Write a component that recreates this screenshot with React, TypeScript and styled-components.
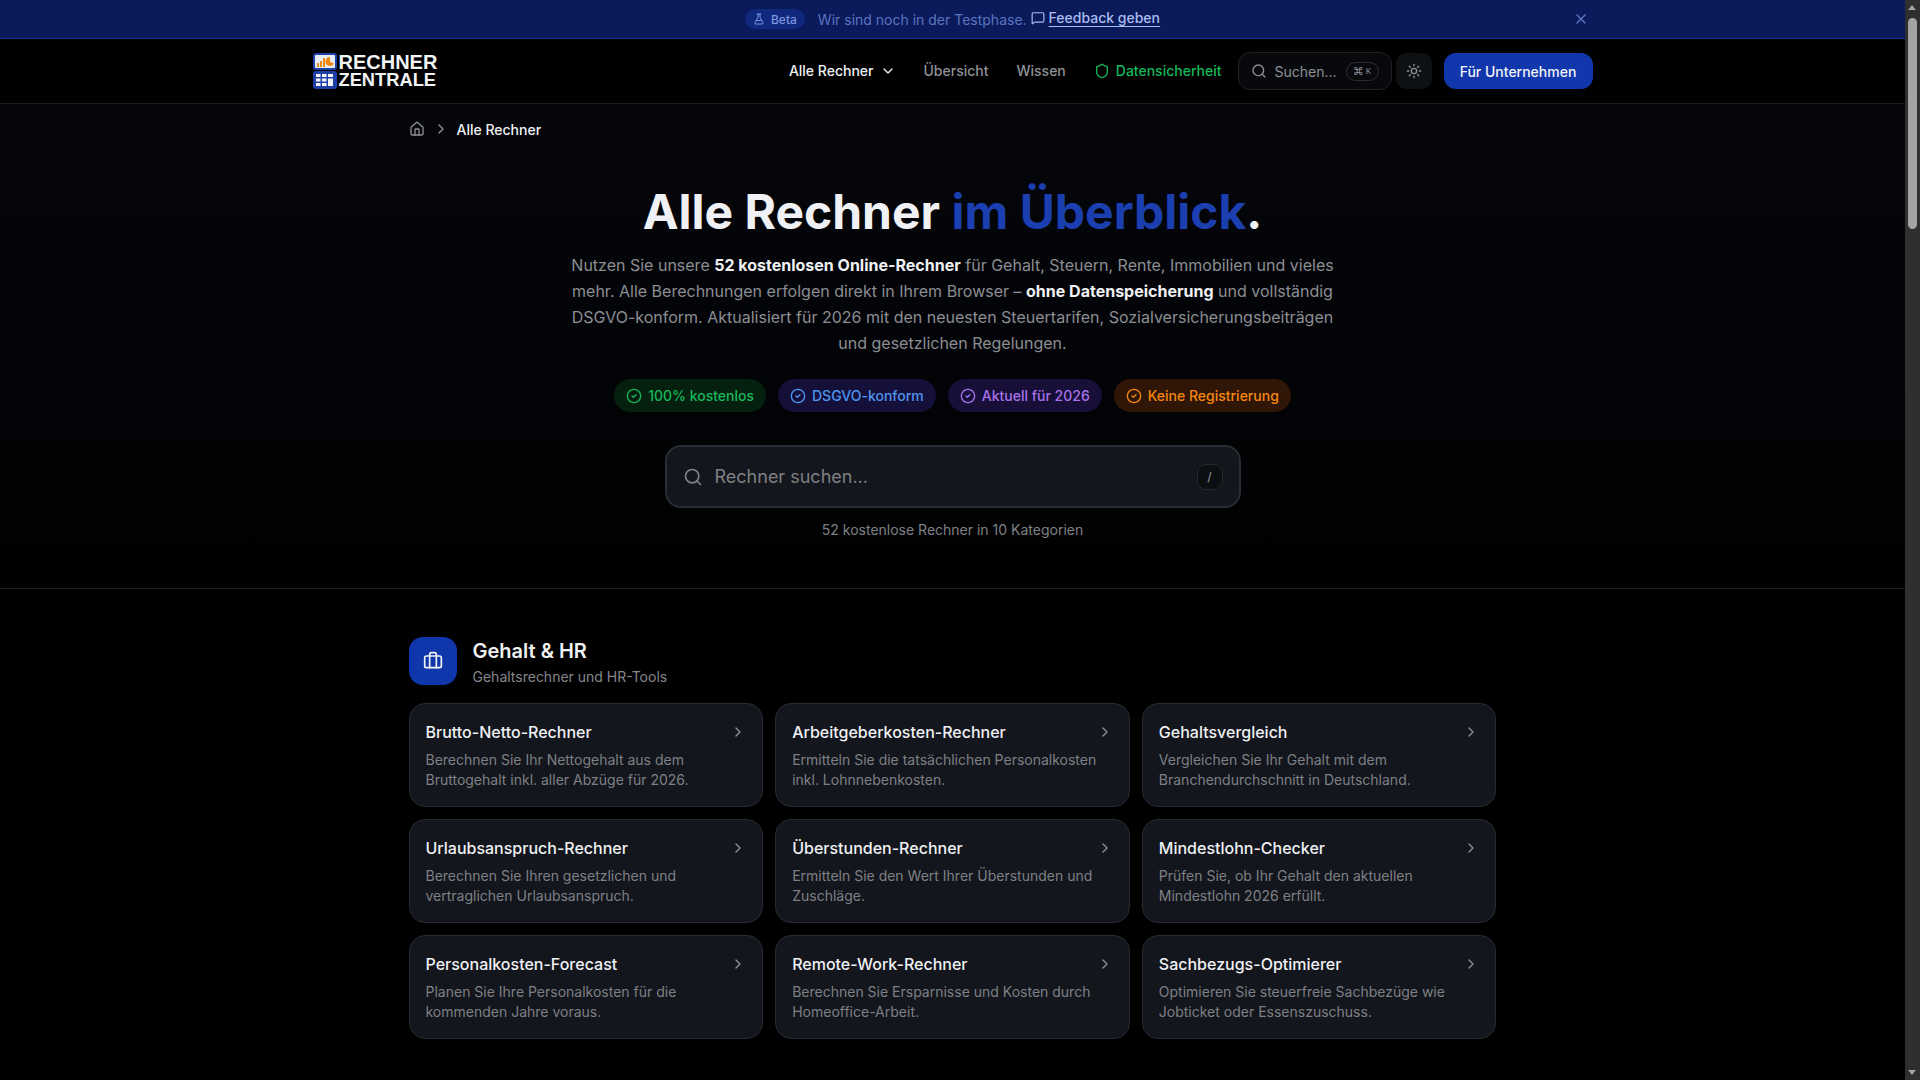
import React from "react";
import styled, { createGlobalStyle } from "styled-components";
import { Briefcase, ChevronDown, ChevronRight, CircleCheck, FlaskConical, House, MessageSquare, Search, Shield, Sun, X } from "lucide-react";

const Global = createGlobalStyle`
  html { color-scheme: dark; background: #000; }
  body { margin: 0; background: #000; font-family: Inter, "Noto Sans", sans-serif; color: #fff; overflow: hidden; }
  * { box-sizing: border-box; }
`;

const Page = styled.div`
  min-height: 100vh;
  margin-right: 15px;
  background: #000;
`;

const ScrollRail = styled.div`
  position: fixed;
  top: 0;
  right: 0;
  bottom: 0;
  width: 15px;
  background: #2f2f2f;
`;

const ScrollArrow = styled.span<{ $down?: boolean }>`
  position: absolute;
  left: 3px;
  ${(p) => (p.$down ? "bottom: 5px;" : "top: 5px;")}
  width: 0;
  height: 0;
  border-left: 4.5px solid transparent;
  border-right: 4.5px solid transparent;
  ${(p) => (p.$down ? "border-top: 5px solid #a3a3a3;" : "border-bottom: 5px solid #a3a3a3;")}
`;

const ScrollThumb = styled.span`
  position: absolute;
  top: 18px;
  left: 3px;
  width: 9px;
  height: 211px;
  border-radius: 5px;
  background: #a3a3a3;
`;

const Banner = styled.div`
  height: 39px;
  background: #0a1a5a;
  border-bottom: 1px solid #12308f;
`;

const BannerInner = styled.div`
  position: relative;
  max-width: 1280px;
  height: 38px;
  margin: 0 auto;
  display: flex;
  align-items: center;
  justify-content: center;
  font-size: 14px;
  color: #5a74c2;
`;

const BetaPill = styled.span`
  display: inline-flex;
  align-items: center;
  gap: 6px;
  height: 20px;
  padding: 0 8px;
  margin-right: 13px;
  border-radius: 999px;
  background: #10297e;
  color: #7b95de;
  font-size: 12px;
  font-weight: 500;
`;

const BannerText = styled.span`
  margin-top: 1px;
`;

const FeedbackLink = styled.a`
  display: inline-flex;
  align-items: center;
  gap: 4px;
  margin-left: 4px;
  margin-top: -3px;
  color: #a9bdf0;
  font-weight: 500;

  span {
    text-decoration: underline;
    text-underline-offset: 3px;
  }
`;

const CloseButton = styled.button`
  position: absolute;
  right: 4px;
  top: 11px;
  width: 16px;
  height: 16px;
  padding: 0;
  border: 0;
  background: none;
  color: #5a74c2;
  display: flex;
`;

const Header = styled.header`
  height: 65px;
  background: #000;
  border-bottom: 1px solid #1b1c20;
`;

const HeaderInner = styled.div`
  max-width: 1280px;
  height: 64px;
  margin: 0 auto;
  display: flex;
  align-items: center;
  justify-content: space-between;
`;

const Logo = styled.div`
  display: flex;
  align-items: center;
  gap: 2px;
`;

const LogoWord = styled.div`
  margin-top: -2px;
  font-family: "Liberation Sans", Arial, sans-serif;
  font-weight: 700;
  font-size: 18.3px;
  line-height: 17px;
  color: #f1f3f5;

  span {
    display: block;
    font-size: 20px;
    line-height: 18px;
  }
`;

const Nav = styled.nav`
  display: flex;
  align-items: center;
  gap: 4px;
`;

const NavItem = styled.a<{ $tone?: "active" | "safe" }>`
  display: inline-flex;
  align-items: center;
  gap: 6px;
  padding: 0 12px;
  margin-top: -1px;
  font-size: 14px;
  font-weight: 500;
  color: ${(p) => (p.$tone === "active" ? "#eff1f4" : p.$tone === "safe" ? "#16b85a" : "#8f9196")};
`;

const HeaderSearch = styled.div`
  display: flex;
  align-items: center;
  width: 154px;
  height: 38px;
  padding: 0 13px 0 12px;
  gap: 8px;
  border: 1px solid #1f2125;
  border-radius: 12px;
  background: #08090c;
  color: #8f9196;
  font-size: 14px;
`;

const Kbd = styled.span`
  margin-left: auto;
  flex: none;
  width: 33px;
  height: 19px;
  margin-right: -1px;
  display: flex;
  align-items: center;
  justify-content: center;
  gap: 2px;
  border: 1px solid #2a2c31;
  border-radius: 10px;
  font-size: 11px;
  color: #8f9196;

  small {
    font-size: 8px;
  }
`;

const ThemeButton = styled.button`
  width: 36px;
  height: 36px;
  margin-right: 8px;
  padding: 0;
  border: 0;
  border-radius: 10px;
  background: #0d1113;
  color: #8f9196;
  display: flex;
  align-items: center;
  justify-content: center;
`;

const CtaButton = styled.a`
  width: 149px;
  height: 36px;
  display: flex;
  align-items: center;
  justify-content: center;
  border-radius: 12px;
  background: #1237ac;
  color: #f1f3f8;
  font-size: 14px;
  font-weight: 500;
`;

const HeroBand = styled.div`
  background: linear-gradient(#04060b, #020305 70%, #000);
  border-bottom: 1px solid #1b1c20;
  height: 485px;
`;

const Container = styled.div`
  max-width: 1152px;
  margin: 0 auto;
  padding: 0 32px;
`;

const Crumbs = styled.div`
  display: flex;
  align-items: center;
  gap: 8px;
  height: 50px;
  font-size: 14px;
  font-weight: 500;
  color: #8f9196;

  strong {
    font-weight: 500;
    color: #eff1f4;
  }
`;

const Hero = styled.section`
  padding-top: 34px;
  display: flex;
  flex-direction: column;
  align-items: center;
  text-align: center;
`;

const Title = styled.h1`
  margin: 0 0 16px;
  font-size: 48px;
  line-height: 48px;
  font-weight: 700;
  color: #eff1f4;

  em {
    font-style: normal;
    color: #1b3fb0;
  }
`;

const Lead = styled.p`
  margin: 0 0 23px;
  max-width: 768px;
  font-size: 16px;
  line-height: 26px;
  color: #8c8e93;

  b {
    font-weight: 700;
    color: #eff1f4;
  }
`;

const Badges = styled.div`
  display: flex;
  gap: 12px;
  margin-bottom: 33px;
`;

const Badge = styled.span<{ $fg: string; $bg: string }>`
  display: inline-flex;
  align-items: center;
  gap: 6px;
  height: 33px;
  padding: 0 12px;
  border-radius: 999px;
  font-size: 14px;
  font-weight: 500;
  color: ${(p) => p.$fg};
  background: ${(p) => p.$bg};
`;

const BigSearch = styled.div`
  width: 576px;
  height: 63px;
  padding: 0 16px;
  display: flex;
  align-items: center;
  gap: 12px;
  background: #13161c;
  border: 2px solid #2a2d33;
  border-radius: 16px;
  font-size: 18px;
  color: #7e8085;
`;

const SlashKey = styled.span`
  margin-left: auto;
  width: 26px;
  height: 26px;
  display: flex;
  align-items: center;
  justify-content: center;
  border: 1px solid #24272c;
  border-radius: 9px;
  background: #0c0f12;
  font-size: 12px;
  color: #9a9ca1;
`;

const Count = styled.p`
  margin: 12px 0 0;
  font-size: 14px;
  line-height: 20px;
  color: #7e8085;
`;

const Category = styled.section`
  padding-top: 48px;
`;

const CategoryHead = styled.div`
  display: flex;
  align-items: flex-start;
  gap: 16px;
  margin-bottom: 16px;
`;

const CategoryIcon = styled.div`
  width: 48px;
  height: 48px;
  border-radius: 14px;
  background: #1036ac;
  color: #f1f3f8;
  display: flex;
  align-items: center;
  justify-content: center;
`;

const CategoryTitle = styled.h2`
  margin: 0 0 2px;
  font-size: 20px;
  line-height: 28px;
  font-weight: 600;
  color: #eff1f4;
`;

const CategorySub = styled.p`
  margin: 0;
  font-size: 14px;
  line-height: 20px;
  color: #85878c;
`;

const Grid = styled.div`
  display: grid;
  grid-template-columns: repeat(3, 1fr);
  gap: 12px;
`;

const Card = styled.a`
  display: block;
  height: 104px;
  padding: 16px;
  background: #13161c;
  border: 1px solid #272a30;
  border-radius: 16px;
`;

const CardTop = styled.div`
  display: flex;
  align-items: center;
  justify-content: space-between;
  height: 24px;
  margin-bottom: 6px;
  color: #8f9196;
`;

const CardTitle = styled.h3`
  margin: 0;
  font-size: 16px;
  line-height: 24px;
  font-weight: 500;
  color: #eff1f4;
`;

const CardText = styled.p`
  margin: 0;
  font-size: 14px;
  line-height: 20px;
  color: #7e8085;
`;

const tools: [string, string][] = [
  ["Brutto-Netto-Rechner", "Berechnen Sie Ihr Nettogehalt aus dem Bruttogehalt inkl. aller Abzüge für 2026."],
  ["Arbeitgeberkosten-Rechner", "Ermitteln Sie die tatsächlichen Personalkosten inkl. Lohnnebenkosten."],
  ["Gehaltsvergleich", "Vergleichen Sie Ihr Gehalt mit dem Branchendurchschnitt in Deutschland."],
  ["Urlaubsanspruch-Rechner", "Berechnen Sie Ihren gesetzlichen und vertraglichen Urlaubsanspruch."],
  ["Überstunden-Rechner", "Ermitteln Sie den Wert Ihrer Überstunden und Zuschläge."],
  ["Mindestlohn-Checker", "Prüfen Sie, ob Ihr Gehalt den aktuellen Mindestlohn 2026 erfüllt."],
  ["Personalkosten-Forecast", "Planen Sie Ihre Personalkosten für die kommenden Jahre voraus."],
  ["Remote-Work-Rechner", "Berechnen Sie Ersparnisse und Kosten durch Homeoffice-Arbeit."],
  ["Sachbezugs-Optimierer", "Optimieren Sie steuerfreie Sachbezüge wie Jobticket oder Essenszuschuss."],
];

const badges = [
  { label: "100% kostenlos", fg: "#16b85a", bg: "#06200f" },
  { label: "DSGVO-konform", fg: "#4f94ee", bg: "#14103a" },
  { label: "Aktuell für 2026", fg: "#a873ea", bg: "#170f38" },
  { label: "Keine Registrierung", fg: "#f5860f", bg: "#2f1607" },
];

const LogoMark = () => (
  <svg width="24" height="36" viewBox="0 0 24 36" aria-hidden>
    <rect x="0" y="0" width="24" height="17" rx="3" fill="#1c3fa8" />
    <rect x="2" y="2" width="20" height="13" rx="1" fill="#e9edf5" />
    <rect x="4" y="10" width="2" height="4" fill="#f08a12" />
    <rect x="7" y="8" width="2" height="6" fill="#f08a12" />
    <rect x="10" y="5" width="2" height="9" fill="#f08a12" />
    <path d="M18 8.5V4a4.5 4.5 0 1 0 4 6.5z" fill="#f08a12" transform="translate(-1 0)" />
    <rect x="0" y="18" width="24" height="18" rx="3" fill="#1c3fa8" />
    {[3, 9].map((x) =>
      [21, 25.5, 30].map((y) => <rect key={`${x}-${y}`} x={x} y={y} width="4.5" height="3" fill="#f1f3f8" />),
    )}
    <rect x="15" y="21" width="5" height="3" fill="#f1f3f8" />
    <rect x="15" y="25.5" width="5" height="7.5" fill="#f1f3f8" />
  </svg>
);

export default function App() {
  return (
    <Page>
      <Global />
      <Banner>
        <BannerInner>
          <BetaPill>
            <FlaskConical size={12} />
            Beta
          </BetaPill>
          <BannerText>Wir sind noch in der Testphase.</BannerText>
          <FeedbackLink>
            <MessageSquare size={14} />
            <span>Feedback geben</span>
          </FeedbackLink>
          <CloseButton>
            <X size={16} />
          </CloseButton>
        </BannerInner>
      </Banner>
      <Header>
        <HeaderInner>
          <Logo>
            <LogoMark />
            <LogoWord>
              <span>RECHNER</span>
              ZENTRALE
            </LogoWord>
          </Logo>
          <Nav>
            <NavItem $tone="active">
              Alle Rechner
              <ChevronDown size={16} />
            </NavItem>
            <NavItem>Übersicht</NavItem>
            <NavItem>Wissen</NavItem>
            <NavItem $tone="safe">
              <Shield size={16} />
              Datensicherheit
            </NavItem>
            <HeaderSearch>
              <Search size={16} />
              Suchen...
              <Kbd>
                ⌘<small>K</small>
              </Kbd>
            </HeaderSearch>
            <ThemeButton>
              <Sun size={16} />
            </ThemeButton>
            <CtaButton>Für Unternehmen</CtaButton>
          </Nav>
        </HeaderInner>
      </Header>
      <HeroBand>
        <Container>
          <Crumbs>
            <House size={16} />
            <ChevronRight size={16} />
            <strong>Alle Rechner</strong>
          </Crumbs>
        </Container>
        <Hero>
          <Title>
            Alle Rechner <em>im Überblick</em>.
          </Title>
          <Lead>
            Nutzen Sie unsere <b>52 kostenlosen Online-Rechner</b> für Gehalt, Steuern, Rente, Immobilien und vieles
            mehr. Alle Berechnungen erfolgen direkt in Ihrem Browser – <b>ohne Datenspeicherung</b> und vollständig
            DSGVO-konform. Aktualisiert für 2026 mit den neuesten Steuertarifen, Sozialversicherungsbeiträgen und
            gesetzlichen Regelungen.
          </Lead>
          <Badges>
            {badges.map((b) => (
              <Badge key={b.label} $fg={b.fg} $bg={b.bg}>
                <CircleCheck size={16} />
                {b.label}
              </Badge>
            ))}
          </Badges>
          <BigSearch>
            <Search size={20} />
            Rechner suchen...
            <SlashKey>/</SlashKey>
          </BigSearch>
          <Count>52 kostenlose Rechner in 10 Kategorien</Count>
        </Hero>
      </HeroBand>
      <Container>
        <Category>
          <CategoryHead>
            <CategoryIcon>
              <Briefcase size={20} />
            </CategoryIcon>
            <div>
              <CategoryTitle>Gehalt &amp; HR</CategoryTitle>
              <CategorySub>Gehaltsrechner und HR-Tools</CategorySub>
            </div>
          </CategoryHead>
          <Grid>
            {tools.map(([title, text]) => (
              <Card key={title}>
                <CardTop>
                  <CardTitle>{title}</CardTitle>
                  <ChevronRight size={16} />
                </CardTop>
                <CardText>{text}</CardText>
              </Card>
            ))}
          </Grid>
        </Category>
      </Container>
      <ScrollRail>
        <ScrollArrow />
        <ScrollThumb />
        <ScrollArrow $down />
      </ScrollRail>
    </Page>
  );
}
